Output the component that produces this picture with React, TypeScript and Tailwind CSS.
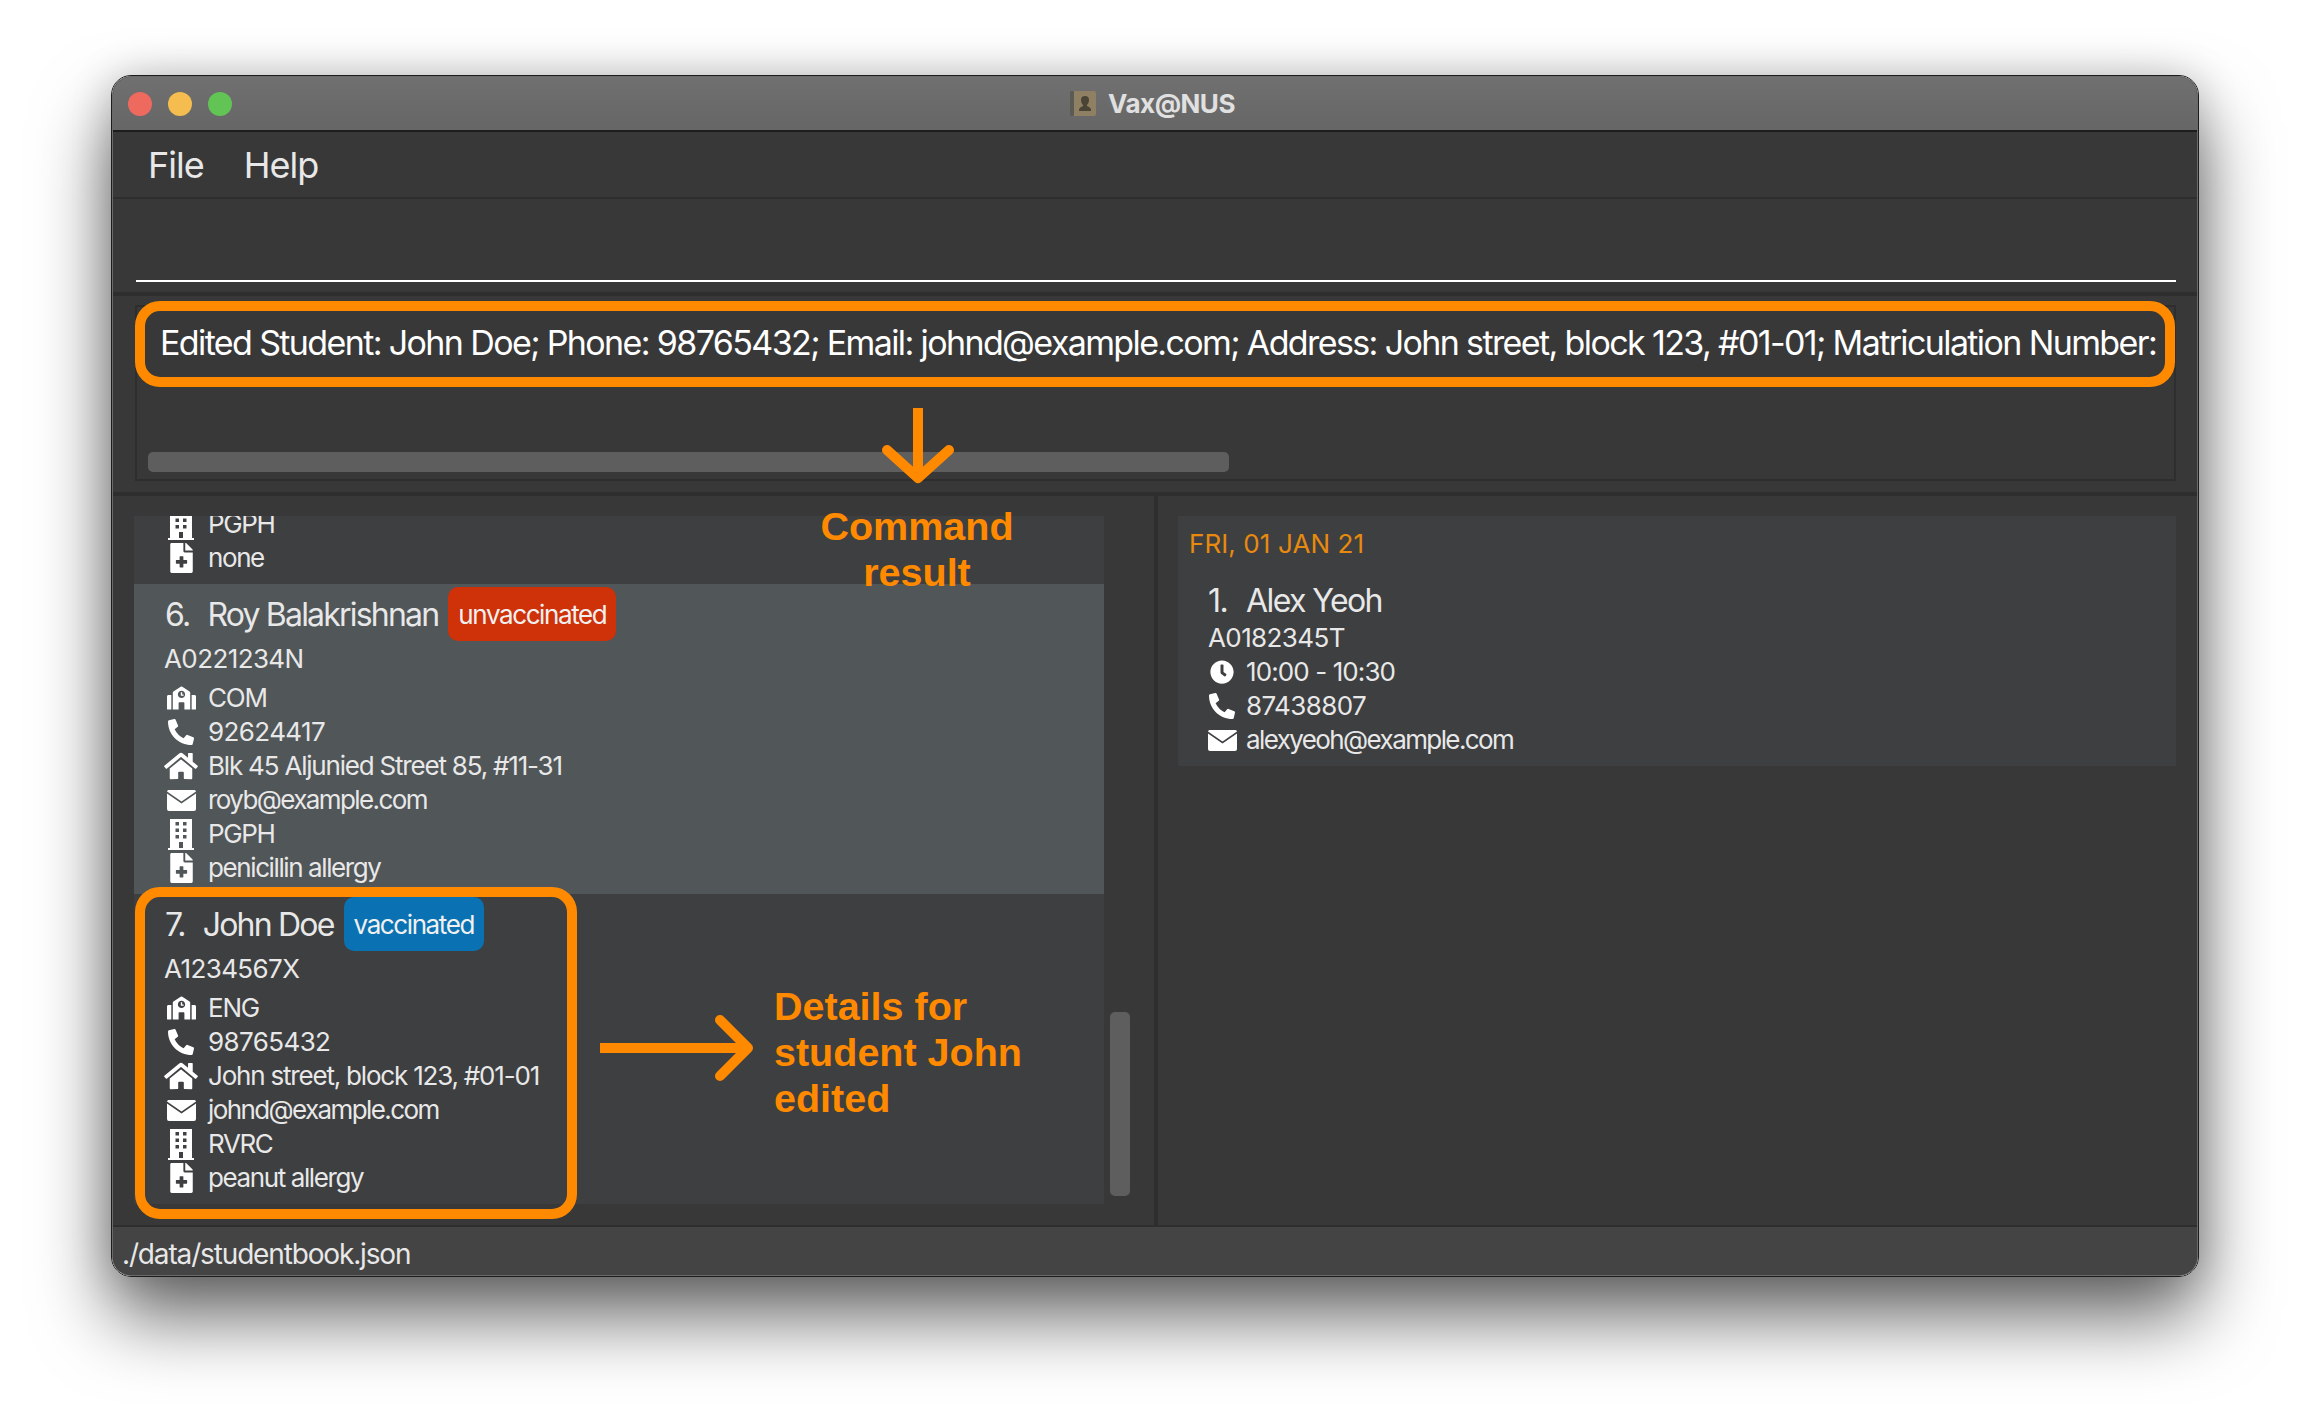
import React from "react";
import { FaSchool, FaPhoneAlt, FaHome, FaFileMedical, FaClock } from "react-icons/fa";

const rowText = "text-[26px] leading-[34px] text-[#e8e8e8] whitespace-nowrap";

const MailIcon: React.FC = () => (
  <svg width="29" height="21" viewBox="0 0 29 21" fill="#ffffff">
    <path d="M2 0H27C28 0 28.8 .6 29 1.4L14.5 11.5L0 1.4C.2 .6 1 0 2 0Z" />
    <path d="M0 3.4L14.5 13.4L29 3.4V19a2 2 0 0 1-2 2H2a2 2 0 0 1-2-2Z" />
  </svg>
);

const BuildingIcon: React.FC = () => (
  <svg width="26" height="31" viewBox="0 0 26 31" fill="#ffffff">
    <path
      fillRule="evenodd"
      d="M2 0H24V29H2ZM7.5 3V6.5H11V3ZM15 3V6.5H18.5V3ZM7.5 9.5V13H11V9.5ZM15 9.5V13H18.5V9.5ZM7.5 16V19.5H11V16ZM15 16V19.5H18.5V16ZM11 23V29H15V23Z"
    />
    <rect x="0" y="29" width="26" height="2" />
  </svg>
);

const schoolIcon = <FaSchool className="h-[24px] w-[29px] text-white" />;
const phoneIcon = <FaPhoneAlt className="h-[26px] w-[26px] text-white" />;
const homeIcon = <FaHome className="h-[30px] w-[34px] text-white" />;
const fileIcon = <FaFileMedical className="h-[30px] w-[23px] text-white" />;

const DetailRow: React.FC<{ icon: React.ReactNode; text: string; tracking: string }> = ({ icon, text, tracking }) => (
  <div className={`flex h-[34px] items-center ${rowText} ${tracking}`}>
    <span className="-ml-[1px] mr-[10px] flex w-[34px] shrink-0 items-center justify-center">{icon}</span>
    <span>{text}</span>
  </div>
);

const StudentCard: React.FC<{
  index: number;
  name: string;
  status: string;
  matric: string;
  faculty: string;
  phone: string;
  address: string;
  email: string;
  hall: string;
  medical: string;
  selected?: boolean;
}> = (props) => (
  <div className={`pl-[31px] pt-[3px] pb-[9px] ${props.selected ? "bg-[#515658]" : ""}`}>
    <div className="flex h-[54px] items-center">
      <span className="whitespace-nowrap pt-[2px] text-[32px] tracking-[-1.8px] text-[#e8e8e8]">
        <span className="mr-[18px]">{props.index}.</span>
        {props.name}
      </span>
      <span
        className={`ml-[10px] flex h-[54px] items-center rounded-[10px] px-[10px] text-[26px] tracking-[-1.4px] text-[#f0f0f0] ${
          props.status === "vaccinated" ? "bg-[#0a72b2]" : "bg-[#cf3108]"
        }`}
      >
        {props.status}
      </span>
    </div>
    <div className={`-ml-[1px] mb-[5px] mt-[1px] h-[34px] tracking-[-0.6px] ${rowText}`}>{props.matric}</div>
    <DetailRow icon={schoolIcon} text={props.faculty} tracking="tracking-[-1.2px]" />
    <DetailRow icon={phoneIcon} text={props.phone} tracking="tracking-[-0.6px]" />
    <DetailRow icon={homeIcon} text={props.address} tracking="tracking-[-1.2px]" />
    <DetailRow icon={<MailIcon />} text={props.email} tracking="tracking-[-1.6px]" />
    <DetailRow icon={<BuildingIcon />} text={props.hall} tracking="tracking-[-1.4px]" />
    <DetailRow icon={fileIcon} text={props.medical} tracking="tracking-[-1.4px]" />
  </div>
);

const App: React.FC = () => {
  return (
    <div
      className="relative h-[1424px] w-[2310px] overflow-hidden bg-white pl-[111px] pt-[75px]"
      style={{ fontFamily: "Inter, 'Liberation Sans', sans-serif" }}
    >
      {/* window */}
      <div className="h-[1202px] w-[2088px] rounded-[20px] border border-[#1d1d1d] shadow-[0_40px_75px_rgba(0,0,0,0.6),0_0_40px_rgba(0,0,0,0.18)]">
        <div className="flex h-full flex-col overflow-hidden rounded-[19px] border border-[#6a6a6a] bg-[#383838]">
          {/* title bar */}
          <div className="relative flex h-[55px] shrink-0 items-center justify-center border-b-2 border-[#1d1d1d] bg-gradient-to-b from-[#707070] to-[#666666] pr-[5px]">
            <div className="absolute left-[15px] flex gap-[16px]">
              <span className="h-[24px] w-[24px] rounded-full bg-[#ee6a5f]" />
              <span className="h-[24px] w-[24px] rounded-full bg-[#f5bd4f]" />
              <span className="h-[24px] w-[24px] rounded-full bg-[#61c454]" />
            </div>
            <svg className="mr-[12px]" width="26" height="25" viewBox="0 0 26 25">
              <rect x="0" y="0" width="26" height="25" rx="2" fill="#8f8064" />
              <rect x="0" y="0" width="4" height="25" rx="1" fill="#5c5a55" />
              <path d="M15 5a4 4 0 0 1 4 4c0 2-1 4-2 5v1c2 1 4 1.500 4 4v1H9v-1c0-2.500 2-3 4-4v-1c-1-1-2-3-2-5a4 4 0 0 1 4-4Z" fill="#4a4436" />
            </svg>
            <span className="text-[26px] font-bold tracking-[-0.5px] text-[#e0e0e0]">Vax@NUS</span>
          </div>

          {/* menu */}
          <div className="flex h-[67px] shrink-0 items-center gap-[40px] border-b-2 border-[#2e2e2e] pl-[35px] text-[36px] tracking-[-1px] text-[#e8e8e8]">
            <span>File</span>
            <span>Help</span>
          </div>

          {/* command box */}
          <div className="flex h-[97px] shrink-0 items-end border-b-4 border-[#2e2e2e] pb-[10px] pl-[23px] pr-[21px]">
            <div className="h-[2px] w-full bg-white" />
          </div>

          {/* result */}
          <div className="h-[200px] shrink-0 border-b-4 border-[#2e2e2e] pb-[11px] pl-[22px] pr-[21px] pt-[9px]">
            <div className="flex h-full flex-col justify-between border-2 border-[#2e2e2e] pb-[7px] pl-[11px] pt-[16px]">
              <div className="whitespace-nowrap pl-[12px] text-[34px] leading-[40px] tracking-[-1.62px] text-white">
                Edited Student: John Doe; Phone: 98765432; Email: johnd@example.com; Address: John street, block 123, #01-01; Matriculation Number:
              </div>
              <div className="h-[20px] w-[1081px] rounded-[5px] bg-[#5e5e5e]" />
            </div>
          </div>

          {/* lists */}
          <div className="flex min-h-0 flex-1">
            <div className="flex w-[1041px] shrink-0 pb-[21px] pl-[21px] pt-[20px]">
              <div className="flex w-[970px] flex-col justify-end overflow-hidden bg-[#3e3f41]">
                <div className="shrink-0 pb-[9px] pl-[31px]">
                  <DetailRow icon={<BuildingIcon />} text="PGPH" tracking="tracking-[-1.4px]" />
                  <DetailRow icon={fileIcon} text="none" tracking="tracking-[-1.4px]" />
                </div>
                <StudentCard
                  index={6}
                  name="Roy Balakrishnan"
                  status="unvaccinated"
                  matric="A0221234N"
                  faculty="COM"
                  phone="92624417"
                  address="Blk 45 Aljunied Street 85, #11-31"
                  email="royb@example.com"
                  hall="PGPH"
                  medical="penicillin allergy"
                  selected
                />
                <StudentCard
                  index={7}
                  name="John Doe"
                  status="vaccinated"
                  matric="A1234567X"
                  faculty="ENG"
                  phone="98765432"
                  address="John street, block 123, #01-01"
                  email="johnd@example.com"
                  hall="RVRC"
                  medical="peanut allergy"
                />
              </div>
              <div className="flex flex-col justify-end pb-[8px] pl-[6px]">
                <div className="h-[184px] w-[20px] rounded-[5px] bg-[#5e5e5e]" />
              </div>
            </div>
            <div className="w-[4px] shrink-0 bg-[#2e2e2e]" />
            <div className="flex-1 pl-[20px] pr-[21px] pt-[20px]">
              <div className="h-[250px] bg-[#3e3f41] pt-[11px]">
                <div className="h-[34px] pl-[11px] text-[26px] leading-[34px] tracking-[0.1px] text-[#e88a0e]">
                  FRI, 01 JAN 21
                </div>
                <div className="mt-[20px] pl-[30px]">
                  <div className="h-[40px] text-[32px] leading-[40px] tracking-[-1.6px] text-[#e8e8e8]">
                    <span className="mr-[19px]">1.</span>Alex Yeoh
                  </div>
                  <div className={`h-[34px] tracking-[-0.6px] ${rowText}`}>A0182345T</div>
                  <div className="flex h-[34px] items-center">
                    <span className="flex w-[38px] items-center pl-[2px]">
                      <FaClock className="h-[24px] w-[24px] text-white" />
                    </span>
                    <span className={`tracking-[-0.9px] ${rowText}`}>10:00 - 10:30</span>
                  </div>
                  <div className="flex h-[34px] items-center">
                    <span className="flex w-[38px] items-center pl-[1px]">
                      <FaPhoneAlt className="h-[26px] w-[26px] text-white" />
                    </span>
                    <span className={`tracking-[-0.6px] ${rowText}`}>87438807</span>
                  </div>
                  <div className="flex h-[34px] items-center">
                    <span className="flex w-[38px] items-center">
                      <MailIcon />
                    </span>
                    <span className={`tracking-[-1.6px] ${rowText}`}>alexyeoh@example.com</span>
                  </div>
                </div>
              </div>
            </div>
          </div>

          {/* status bar */}
          <div className="flex h-[50px] shrink-0 items-center border-t-2 border-[#2e2e2e] bg-[#444444] pl-[9px] pt-[5px] text-[28px] tracking-[-1.15px] text-[#e8e8e8]">
            ./data/studentbook.json
          </div>
        </div>
      </div>

      {/* annotations on top of the screenshot */}
      <div className="absolute left-[135px] top-[301px] h-[86px] w-[2040px] rounded-[25px] border-[10px] border-[#ff8a00]" />
      <div className="absolute left-[135px] top-[887px] h-[332px] w-[442px] rounded-[25px] border-[10px] border-[#ff8a00]" />

      <svg className="absolute left-[870px] top-[400px]" width="96" height="92" viewBox="0 0 96 92">
        <path d="M48 8V78" fill="none" stroke="#ff8a00" strokeWidth="10" />
        <path d="M17 50L48 78L79 50" fill="none" stroke="#ff8a00" strokeWidth="10" strokeLinecap="round" strokeLinejoin="round" />
      </svg>
      <svg className="absolute left-[597px] top-[1005px]" width="164" height="86" viewBox="0 0 164 86">
        <path d="M3 43H150" fill="none" stroke="#ff8a00" strokeWidth="10" />
        <path d="M123 15L151 43L123 71" fill="none" stroke="#ff8a00" strokeWidth="10" strokeLinecap="round" strokeLinejoin="round" />
      </svg>

      <div
        className="absolute left-[767px] top-[503px] w-[300px] text-center text-[39.5px] font-bold leading-[46px] text-[#ff8a00]"
        style={{ fontFamily: "'Liberation Sans', sans-serif" }}
      >
        Command
        <br />
        result
      </div>
      <div
        className="absolute left-[774px] top-[983px] text-[39.5px] font-bold leading-[46px] text-[#ff8a00]"
        style={{ fontFamily: "'Liberation Sans', sans-serif" }}
      >
        Details for
        <br />
        student John
        <br />
        edited
      </div>
    </div>
  );
};

export default App;
